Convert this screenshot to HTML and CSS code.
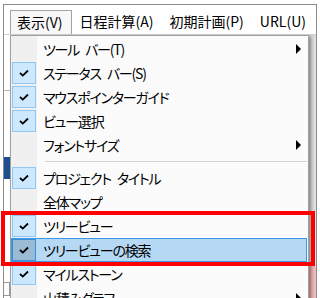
FILE: index.html
```html
<!DOCTYPE html>
<html lang="ja">
<head>
    <meta charset="UTF-8">
    <title>表示メニュー</title>
    <link rel="stylesheet" href="styles.css">
</head>
<body>
    <div class="window">
        <div class="menubar">
            <span class="menubar-item open">表示(V)</span>
            <span class="menubar-item">日程計算(A)</span>
            <span class="menubar-item">初期計画(P)</span>
            <span class="menubar-item">URL(U)</span>
        </div>
        <div class="workspace">
            <div class="side-panel">
                <div class="side-rule"></div>
                <div class="side-block"></div>
                <div class="side-box"></div>
            </div>
            <div class="scroll-track">
                <div class="scroll-pink"></div>
            </div>
        </div>
    </div>

    <div class="dropdown">
        <div class="menu-row">
            <span class="gutter"></span>
            <span class="label">ツール バー(T)</span>
            <span class="sub-arrow"></span>
        </div>
        <div class="menu-row">
            <span class="gutter checked"><svg viewBox="0 0 10 8" width="10" height="8"><path d="M1 4 L3.8 6.6 L9 1.5" fill="none" stroke="#000" stroke-width="1.8"/></svg></span>
            <span class="label">ステータス バー(S)</span>
        </div>
        <div class="menu-row">
            <span class="gutter checked"><svg viewBox="0 0 10 8" width="10" height="8"><path d="M1 4 L3.8 6.6 L9 1.5" fill="none" stroke="#000" stroke-width="1.8"/></svg></span>
            <span class="label">マウスポインターガイド</span>
        </div>
        <div class="menu-row">
            <span class="gutter checked"><svg viewBox="0 0 10 8" width="10" height="8"><path d="M1 4 L3.8 6.6 L9 1.5" fill="none" stroke="#000" stroke-width="1.8"/></svg></span>
            <span class="label">ビュー選択</span>
        </div>
        <div class="menu-row">
            <span class="gutter"></span>
            <span class="label">フォントサイズ</span>
            <span class="sub-arrow"></span>
        </div>
        <div class="menu-sep"></div>
        <div class="menu-row">
            <span class="gutter checked"><svg viewBox="0 0 10 8" width="10" height="8"><path d="M1 4 L3.8 6.6 L9 1.5" fill="none" stroke="#000" stroke-width="1.8"/></svg></span>
            <span class="label">プロジェクト タイトル</span>
        </div>
        <div class="menu-row">
            <span class="gutter"></span>
            <span class="label">全体マップ</span>
        </div>
        <div class="menu-row">
            <span class="gutter checked"><svg viewBox="0 0 10 8" width="10" height="8"><path d="M1 4 L3.8 6.6 L9 1.5" fill="none" stroke="#000" stroke-width="1.8"/></svg></span>
            <span class="label">ツリービュー</span>
        </div>
        <div class="menu-row hover">
            <span class="gutter checked"><svg viewBox="0 0 10 8" width="10" height="8"><path d="M1 4 L3.8 6.6 L9 1.5" fill="none" stroke="#000" stroke-width="1.8"/></svg></span>
            <span class="label">ツリービューの検索</span>
        </div>
        <div class="menu-row">
            <span class="gutter checked"><svg viewBox="0 0 10 8" width="10" height="8"><path d="M1 4 L3.8 6.6 L9 1.5" fill="none" stroke="#000" stroke-width="1.8"/></svg></span>
            <span class="label">マイルストーン</span>
        </div>
        <div class="menu-row">
            <span class="gutter"></span>
            <span class="label">山積みグラフ</span>
            <span class="sub-arrow"></span>
        </div>
    </div>

    <div class="callout"></div>
</body>
</html>
```

FILE: styles.css
```css
* {
    margin: 0;
    padding: 0;
    box-sizing: border-box;
}

body {
    width: 320px;
    height: 298px;
    overflow: hidden;
    position: relative;
    background: #ffffff;
    font-family: "Noto Sans CJK JP", sans-serif;
    font-feature-settings: "palt";
    color: #000;
}

/* 背景のウィンドウ */
.window {
    margin: 4px 3px 0 3px;
    height: 294px;
    border: 1px solid #8c8c8c;
    border-bottom: none;
    display: flex;
    flex-direction: column;
}

.menubar {
    height: 30px;
    display: flex;
    align-items: flex-end;
    padding-left: 6px;
    background: #fff;
    border-bottom: 1px solid #cfcfcf;
}

.menubar-item {
    height: 24px;
    line-height: 23px;
    padding: 0 8px;
    font-size: 14px;
    white-space: nowrap;
}

.menubar-item.open {
    padding: 0 8px 0 6px;
    border: 1px solid #a3a3a3;
    border-bottom: none;
    background: #f7f7f7;
    line-height: 22px;
}

.workspace {
    flex: 1;
    display: flex;
    justify-content: space-between;
}

.side-panel {
    width: 6px;
    display: flex;
    flex-direction: column;
}

.side-rule {
    height: 1px;
    margin-top: 55px;
    background: #b8b8b8;
}

.side-block {
    height: 22px;
    margin-top: 66px;
    background: #1d4f8e;
}

.side-box {
    height: 14px;
    margin-top: 103px;
    border: 1px solid #9a9a9a;
    border-left: none;
}

.scroll-track {
    width: 7px;
    display: flex;
    flex-direction: column;
    justify-content: flex-end;
    background: linear-gradient(to right, #c4c4c4, #e4e4e4);
}

.scroll-pink {
    height: 32px;
    background: linear-gradient(to right, #d99a9a, #ecc2c2);
}

/* ドロップダウンメニュー */
.dropdown {
    position: absolute;
    left: 10px;
    top: 35px;
    width: 299px;
    height: 280px;
    padding-top: 1px;
    border: 1px solid #a0a0a0;
    background: linear-gradient(to right, #f0f0f0 26px, #fbfbfb 26px);
    box-shadow: 2px 2px 3px rgba(0, 0, 0, 0.3);
}

.menu-row {
    height: 24px;
    display: flex;
    align-items: center;
    margin-right: 1px;
    font-size: 14px;
    white-space: nowrap;
}

.menu-row.hover {
    background: #b5d8f4;
    box-shadow: inset 0 0 0 1px #3d97e6;
}

.gutter {
    width: 24px;
    height: 22px;
    margin-left: 1px;
    display: flex;
    align-items: center;
    justify-content: center;
}

.gutter.checked {
    background: #cce8ff;
    border: 1px solid #8fc6f2;
}

.menu-row.hover .gutter.checked {
    background: #9bbad3;
    border-color: #3a8fdb;
}

.label {
    margin-left: 7px;
    line-height: 24px;
    letter-spacing: -1.2px;
    word-spacing: 4px;
}

.sub-arrow {
    margin-left: auto;
    margin-right: 6px;
    width: 0;
    height: 0;
    border-left: 5px solid #000;
    border-top: 5px solid transparent;
    border-bottom: 5px solid transparent;
}

.menu-sep {
    height: 9px;
    display: flex;
    align-items: center;
    padding: 0 1px 0 34px;
}

.menu-sep::after {
    content: '';
    flex: 1;
    height: 1px;
    background: #d2d2d2;
}

/* 強調枠 */
.callout {
    position: absolute;
    left: 1px;
    top: 211px;
    width: 314px;
    height: 55px;
    border: 4px solid #ff0000;
}
```
